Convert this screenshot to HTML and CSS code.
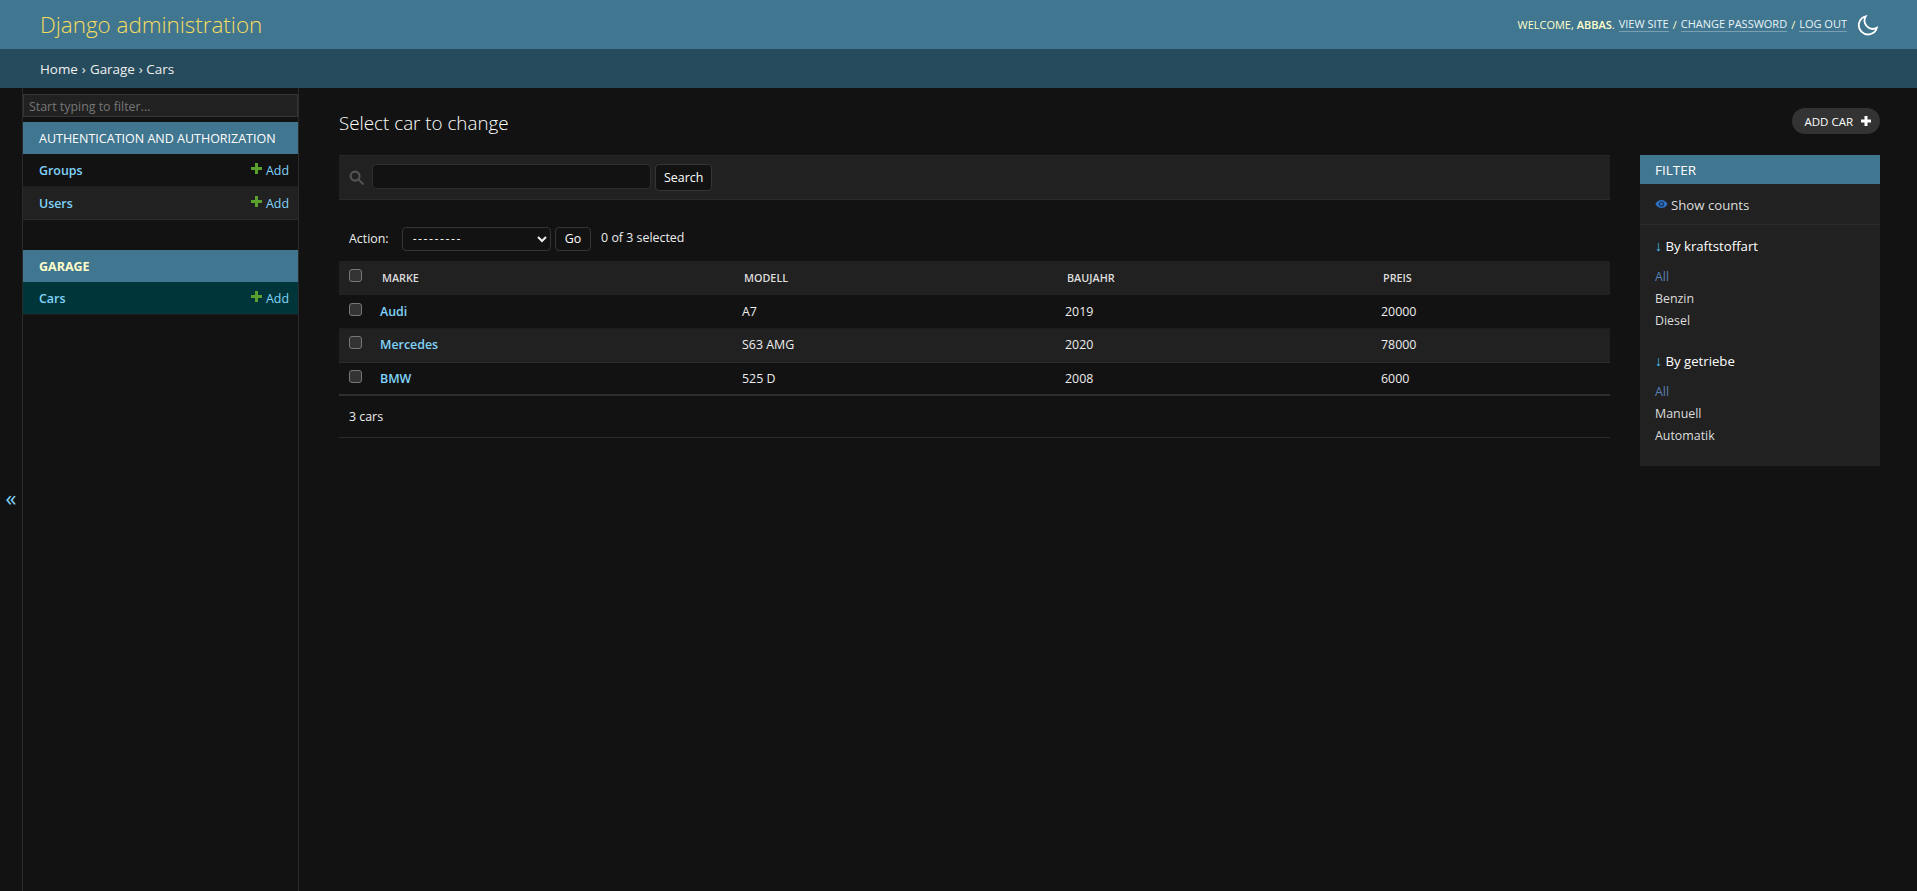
FILE: index.html
```html
<!DOCTYPE html>
<html lang="en">
<head>
    <meta charset="UTF-8">
    <meta name="viewport" content="width=device-width, initial-scale=1.0">
    <title>Select car to change | Django site admin</title>
    <link rel="stylesheet" href="styles.css">
</head>
<body>

    <header class="header">
        <a class="branding" href="#">Django administration</a>
        <div class="user-tools">
            <span>Welcome, <strong>Abbas</strong>.</span>
            <a href="#">View site</a> /
            <a href="#">Change password</a> /
            <a href="#">Log out</a>
            <svg class="theme-icon" viewBox="0 0 24 24" width="22" height="22" fill="none" stroke="#fff" stroke-width="2">
                <path d="M9.500 2.600A10 10 0 1 0 21.600 15 A9 9 0 0 1 9.500 2.600z"/>
            </svg>
        </div>
    </header>

    <div class="breadcrumbs"><a href="#">Home</a> › <a href="#">Garage</a> › Cars</div>

    <div class="main">
        <button class="sidebar-toggle">«</button>

        <nav class="sidebar">
            <input class="nav-filter" type="text" placeholder="Start typing to filter...">

            <div class="app-list">
                <div class="app-caption">Authentication and Authorization</div>
                <div class="app-row">
                    <a class="model-link" href="#">Groups</a>
                    <a class="add-link" href="#"><svg class="plus" viewBox="0 0 11 11" width="11" height="11"><path d="M4 0h3v4h4v3h-4v4h-3v-4h-4v-3h4z"/></svg>Add</a>
                </div>
                <div class="app-row alt">
                    <a class="model-link" href="#">Users</a>
                    <a class="add-link" href="#"><svg class="plus" viewBox="0 0 11 11" width="11" height="11"><path d="M4 0h3v4h4v3h-4v4h-3v-4h-4v-3h4z"/></svg>Add</a>
                </div>
            </div>

            <div class="app-list">
                <div class="app-caption current">Garage</div>
                <div class="app-row selected">
                    <a class="model-link" href="#">Cars</a>
                    <a class="add-link" href="#"><svg class="plus" viewBox="0 0 11 11" width="11" height="11"><path d="M4 0h3v4h4v3h-4v4h-3v-4h-4v-3h4z"/></svg>Add</a>
                </div>
            </div>
        </nav>

        <main class="content">
            <div class="title-row">
                <h1>Select car to change</h1>
                <a class="add-button" href="#">Add car
                    <svg viewBox="0 0 12 12" width="12" height="12"><path d="M4.500 1h3v3.500h3.500v3h-3.500v3.500h-3v-3.500h-3.500v-3h3.500z" fill="#fff"/></svg>
                </a>
            </div>

            <div class="columns">
                <section class="results">
                    <form class="search-bar">
                        <svg class="search-icon" viewBox="0 0 16 16" width="15" height="15" fill="none" stroke="#555" stroke-width="2.200">
                            <circle cx="6.500" cy="6.500" r="4.800"/>
                            <path d="M10 10l4.800 4.800" stroke-linecap="round"/>
                        </svg>
                        <input class="search-input" type="text">
                        <button class="btn" type="button">Search</button>
                    </form>

                    <div class="actions">
                        <label>Action:</label>
                        <select class="action-select">
                            <option>---------</option>
                        </select>
                        <button class="btn go" type="button">Go</button>
                        <span class="selected-count">0 of 3 selected</span>
                    </div>

                    <table class="result-table">
                        <colgroup>
                            <col class="col-check">
                            <col class="col-marke">
                            <col class="col-modell">
                            <col class="col-baujahr">
                            <col class="col-preis">
                        </colgroup>
                        <thead>
                            <tr>
                                <th><input type="checkbox"></th>
                                <th>Marke</th>
                                <th>Modell</th>
                                <th>Baujahr</th>
                                <th>Preis</th>
                            </tr>
                        </thead>
                        <tbody>
                            <tr>
                                <td><input type="checkbox"></td>
                                <td><a href="#">Audi</a></td>
                                <td>A7</td>
                                <td>2019</td>
                                <td>20000</td>
                            </tr>
                            <tr class="alt">
                                <td><input type="checkbox"></td>
                                <td><a href="#">Mercedes</a></td>
                                <td>S63 AMG</td>
                                <td>2020</td>
                                <td>78000</td>
                            </tr>
                            <tr class="last">
                                <td><input type="checkbox"></td>
                                <td><a href="#">BMW</a></td>
                                <td>525 D</td>
                                <td>2008</td>
                                <td>6000</td>
                            </tr>
                        </tbody>
                    </table>

                    <p class="paginator">3 cars</p>
                </section>

                <aside class="filter">
                    <h2>Filter</h2>
                    <div class="show-counts">
                        <svg viewBox="0 0 16 12" width="13" height="10"><path d="M8 1C4.500 1 1.800 3.200 .5 6 1.800 8.800 4.500 11 8 11s6.200-2.200 7.500-5C14.200 3.200 11.500 1 8 1z" fill="#2f6fc0"/><circle cx="8" cy="6" r="3.200" fill="#16305a"/><circle cx="8" cy="6" r="1.800" fill="#2f6fc0"/></svg>
                        <a href="#">Show counts</a>
                    </div>
                    <div class="filter-group">
                        <h3><span class="arrow">↓</span> By kraftstoffart</h3>
                        <ul>
                            <li class="active"><a href="#">All</a></li>
                            <li><a href="#">Benzin</a></li>
                            <li><a href="#">Diesel</a></li>
                        </ul>
                    </div>
                    <div class="filter-group">
                        <h3><span class="arrow">↓</span> By getriebe</h3>
                        <ul>
                            <li class="active"><a href="#">All</a></li>
                            <li><a href="#">Manuell</a></li>
                            <li><a href="#">Automatik</a></li>
                        </ul>
                    </div>
                </aside>
            </div>
        </main>
    </div>

</body>
</html>
```

FILE: styles.css
```css
* {
    box-sizing: border-box;
}

body {
    margin: 0;
    height: 891px;
    overflow: hidden;
    display: flex;
    flex-direction: column;
    background-color: #121212;
    color: #eeeeee;
    font-family: "Open Sans", "Noto Sans", sans-serif;
    font-size: 12.400px;
}

a {
    text-decoration: none;
    color: inherit;
}

/* header */
.header {
    height: 49px;
    padding: 0 40px;
    display: flex;
    justify-content: space-between;
    align-items: center;
    background-color: #417690;
    color: #ffc;
}

.branding {
    color: #f5dd5d;
    font-size: 22.400px;
    font-weight: 300;
}

.user-tools {
    display: flex;
    align-items: center;
    gap: 4px;
    font-size: 11px;
    text-transform: uppercase;
    margin-right: -2px;
}

.user-tools strong {
    font-weight: 600;
}

.user-tools a {
    color: #e8f4f8;
    border-bottom: 1px solid rgba(255, 255, 255, 0.3);
    line-height: 14px;
}

.theme-icon {
    margin-left: 6px;
}

.breadcrumbs {
    height: 39px;
    padding: 1px 40px 0;
    display: flex;
    align-items: center;
    gap: 4px;
    background-color: #264b5d;
    color: #f0f0f0;
    font-size: 13.400px;
}

/* layout */
.main {
    flex: 1;
    display: flex;
    min-height: 0;
}

.sidebar-toggle {
    width: 23px;
    padding: 14px 0 0;
    border: none;
    border-right: 1px solid #2b2b2b;
    background-color: #121212;
    color: #81d4fa;
    font-size: 22px;
    font-family: inherit;
}

.sidebar {
    width: 276px;
    padding-top: 6px;
    border-right: 1px solid #2b2b2b;
}

.nav-filter {
    display: block;
    width: 275px;
    height: 23px;
    margin-bottom: 5px;
    padding: 1px 5px 0;
    background-color: #212121;
    border: 1px solid #353535;
    color: #eee;
    font: inherit;
}

.nav-filter::placeholder {
    color: #777;
}

.app-list {
    margin-bottom: 30px;
    width: 275px;
}

.app-caption {
    height: 32px;
    line-height: 33px;
    padding-left: 16px;
    background-color: #417690;
    color: #fff;
    font-size: 12.500px;
    font-weight: 400;
    text-transform: uppercase;
}

.app-caption.current {
    color: #ffc;
    font-weight: 700;
}

.app-row {
    height: 33px;
    padding: 0 9px 0 16px;
    display: flex;
    justify-content: space-between;
    align-items: center;
    border-bottom: 1px solid #1d1d1d;
}

.app-row.alt {
    background-color: #212121;
    border-bottom-color: #2b2b2b;
}

.app-row.selected {
    background-color: #00363a;
}

.model-link {
    color: #81d4fa;
    font-weight: 600;
}

.add-link {
    display: flex;
    align-items: center;
    gap: 4px;
    color: #81d4fa;
}

.plus {
    fill: #5aa02c;
    margin-top: -3px;
}

/* content */
.content {
    flex: 1;
    padding: 0 37px 0 40px;
    min-width: 0;
}

.title-row {
    height: 67px;
    display: flex;
    justify-content: space-between;
    align-items: center;
}

.title-row h1 {
    margin: 0 0 -2px;
    font-size: 18.800px;
    font-weight: 300;
    color: #fff;
}

.add-button {
    height: 26px;
    padding: 0 8px 0 12px;
    display: flex;
    align-items: center;
    gap: 7px;
    margin-top: -1px;
    border-radius: 13px;
    background-color: #333;
    color: #fff;
    font-size: 11.500px;
    text-transform: uppercase;
}

.columns {
    display: flex;
    gap: 30px;
    align-items: flex-start;
}

.results {
    width: 1271px;
}

.search-bar {
    height: 45px;
    padding: 0 10px;
    display: flex;
    align-items: center;
    gap: 8px;
    background-color: #212121;
    border-bottom: 1px solid #2b2b2b;
    border-top: 1px solid #262626;
}

.search-icon {
    flex: none;
}

.search-input {
    width: 279px;
    height: 25px;
    margin: -2px -4px 0 0;
    background-color: #121212;
    border: 1px solid #2e2e2e;
    border-radius: 4px;
    color: #eee;
}

.btn {
    height: 27px;
    padding: 0 8px;
    background-color: #121212;
    border: 1px solid #353535;
    border-radius: 4px;
    color: #fff;
    font-family: inherit;
    font-size: 12.400px;
}

.actions {
    height: 61px;
    padding: 16px 10px 0;
    display: flex;
    align-items: center;
    color: #eee;
}

.action-select {
    width: 149px;
    height: 24px;
    margin-left: 13px;
    padding-left: 6px;
    background-color: #121212;
    border: 1px solid #353535;
    border-radius: 4px;
    color: #eee;
    font-family: inherit;
    font-size: 12.400px;
    letter-spacing: 1.500px;
}

.go {
    height: 24px;
    margin-left: 4px;
    padding: 0 9px;
}

.selected-count {
    margin-left: 10px;
    margin-top: -2px;
}

.result-table {
    width: 100%;
    table-layout: fixed;
    border-collapse: collapse;
    border-bottom: 2px solid #2e2e2e;
}

.col-check { width: 33px; }
.col-marke { width: 362px; }
.col-modell { width: 323px; }
.col-baujahr { width: 316px; }
.col-preis { width: 237px; }

.result-table th {
    height: 34px;
    padding: 0 10px 2px;
    text-align: left;
    background-color: #212121;
    color: #ddd;
    font-size: 10.800px;
    font-weight: 600;
    text-transform: uppercase;
}

.result-table td {
    height: 33px;
    padding: 1px 8px 0;
    color: #eee;
}

.result-table tr.alt td {
    height: 34px;
    padding-top: 0;
    padding-bottom: 1px;
    background-color: #212121;
    border-top: 1px solid #1d1d1d;
    border-bottom: 1px solid #2b2b2b;
}

.result-table tr.last td {
    padding-top: 0;
}

.result-table td a {
    color: #81d4fa;
    font-weight: 600;
}

.result-table input {
    display: block;
    appearance: none;
    width: 13px;
    height: 13px;
    margin: -4px 0 0;
    background-color: #333;
    border: 1px solid #777;
    border-radius: 3px;
}

.result-table tr > :first-child {
    padding-left: 10px;
    padding-right: 0;
}

.result-table tr.alt > :first-child {
    padding-left: 10px;
}

.paginator {
    height: 42px;
    margin: 0;
    padding: 0 10px;
    display: flex;
    align-items: center;
    border-bottom: 1px solid #2b2b2b;
    color: #eee;
}

/* filter */
.filter {
    width: 240px;
    height: 311px;
    background-color: #212121;
}

.filter h2 {
    height: 29px;
    line-height: 31px;
    margin: 0;
    padding-left: 15px;
    background-color: #417690;
    color: #fff;
    font-size: 13.500px;
    font-weight: 400;
    text-transform: uppercase;
}

.show-counts {
    height: 41px;
    padding: 2px 0 0 15px;
    display: flex;
    align-items: center;
    gap: 3px;
    border-bottom: 1px solid #2b2b2b;
    color: #ddd;
    font-size: 13.200px;
}

.show-counts svg {
    margin-top: -3px;
}

.filter-group {
    padding: 11px 0 0 15px;
}

.filter-group h3 {
    margin: 0 0 10px;
    color: #fff;
    font-size: 13.200px;
    font-weight: 400;
    line-height: 20px;
}

.arrow {
    color: #4fc3f7;
    font-size: 14px;
}

.filter-group ul {
    margin: 0 0 8px;
    padding: 0;
    list-style: none;
}

.filter-group li {
    height: 22px;
    line-height: 22px;
    color: #ddd;
}

.filter-group li.active {
    color: #5b80b2;
}
```
